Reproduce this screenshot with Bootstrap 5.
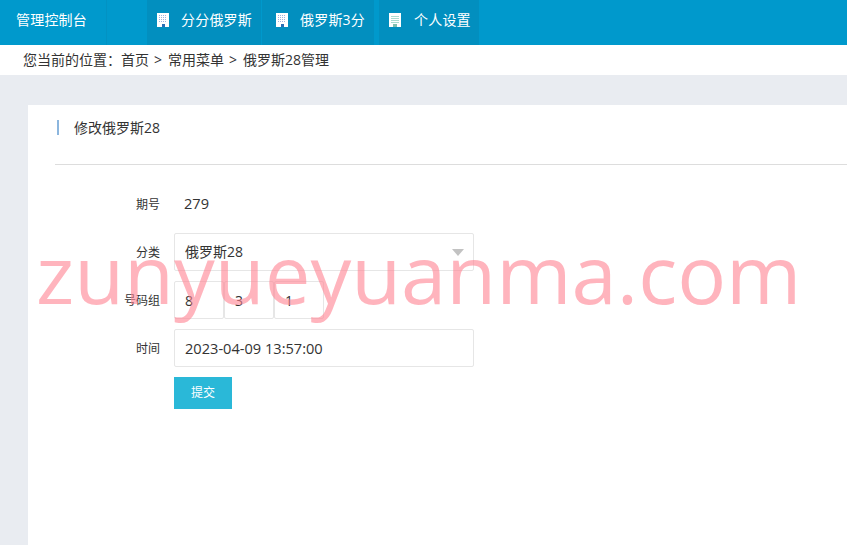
<!DOCTYPE html>
<html lang="zh">
<head>
<meta charset="utf-8">
<title>俄罗斯28管理</title>
<link rel="stylesheet" href="https://cdn.jsdelivr.net/npm/bootstrap@5.3.0/dist/css/bootstrap.min.css">
<style>
html,body{height:100%;overflow:hidden}
body{background:#e9ecf1;color:#333;font-family:"Open Sans","Noto Sans CJK SC",sans-serif;font-size:14px;position:relative}
.topbar{height:45px;background:#0099cc;color:#fff;font-size:14px;letter-spacing:.2px}
.brandbox{width:107px;padding-left:16px;line-height:39px;height:45px;border-right:1px solid #0292c3;margin-right:40px}
.menuitem{height:45px;background:#028fbf;color:#fff;text-decoration:none}
.menuone{width:114px;padding-left:10px;gap:12px;margin-right:1px}
.menutwo{width:112px;padding-left:14px;gap:12px;margin-right:5px}
.menuthree{width:100px;padding-left:10px;gap:13px}
.menuitem svg{flex:none;margin-top:13px}
.menuitem span{line-height:39px}
.crumbbar{height:30px;background:#fff;padding-left:23px;line-height:29px;color:#333}
.crumbsep{padding:0 6px 0 5px}
.panelwrap{padding:30px 0 0 28px;height:470px}
.panelbox{background:#fff;height:100%;padding-left:27px}
.headline{height:60px;border-bottom:1px solid #ddd;padding-top:15px;padding-left:2px}
.headline div{border-left:2px solid #8cb6de;height:15px;line-height:15px;padding-left:15px}
.formarea{padding-top:20px}
.fieldrow{display:flex;margin-bottom:10px}
.fieldlabel{width:105px;text-align:right;margin-right:14px;font-size:12px;line-height:39px;height:38px;flex:none}
.fieldbox{width:300px;height:38px;border:1px solid #e6e6e6;border-radius:2px;padding:0 10px;line-height:36px;position:relative;background:#fff}
.fieldwide{font-size:14.6px}
.fieldplain{line-height:37px;font-size:14.6px;padding-left:10px;height:38px}
.caretmark{position:absolute;right:9px;top:15px;width:0;height:0;border-left:6px solid transparent;border-right:6px solid transparent;border-top:7px solid #c2c2c2}
.digitbox{width:50px;height:38px;border:1px solid #e6e6e6;border-radius:2px;padding-left:10px;line-height:37px}
.submitbtn{background:#2ab8d8;color:#fff;border:0;border-radius:0;width:58px;height:32px;font-size:12px;padding:0}
.watermark{position:absolute;left:36px;top:230px;font-family:"Open Sans",sans-serif;font-size:81.4px;line-height:86px;color:rgba(255,130,145,.6);white-space:nowrap;pointer-events:none}
</style>
</head>
<body>
<div class="topbar d-flex">
  <div class="brandbox">管理控制台</div>
  <a class="menuitem menuone d-flex" href="#"><svg width="12" height="14" viewBox="0 0 12 14"><path fill="#fff" d="M0 0h12v14H0z"/><path fill="#9db3e0" d="M2 2h1v1H2zm2 0h1v1H4zm2 0h1v1H6zm2 0h1v1H8zM2 4h1v1H2zm2 0h1v1H4zm2 0h1v1H6zm2 0h1v1H8zM2 6h1v1H2zm2 0h1v1H4zm2 0h1v1H6zm2 0h1v1H8zM2 8h1v1H2zm2 0h1v1H4zm2 0h1v1H6zm2 0h1v1H8z"/><path fill="#2a6fb5" d="M5 11h3v3H5z"/></svg><span>分分俄罗斯</span></a>
  <a class="menuitem menutwo d-flex" href="#"><svg width="12" height="14" viewBox="0 0 12 14"><path fill="#fff" d="M0 0h12v14H0z"/><path fill="#9db3e0" d="M2 2h1v1H2zm2 0h1v1H4zm2 0h1v1H6zm2 0h1v1H8zM2 4h1v1H2zm2 0h1v1H4zm2 0h1v1H6zm2 0h1v1H8zM2 6h1v1H2zm2 0h1v1H4zm2 0h1v1H6zm2 0h1v1H8zM2 8h1v1H2zm2 0h1v1H4zm2 0h1v1H6zm2 0h1v1H8z"/><path fill="#2a6fb5" d="M5 11h3v3H5z"/></svg><span>俄罗斯3分</span></a>
  <a class="menuitem menuthree d-flex" href="#"><svg width="12" height="14" viewBox="0 0 12 14"><path fill="#fff" d="M0 0h12v14H0z"/><path fill="#a8dccf" d="M2 3h8v1H2zm0 2h8v1H2zm0 2h8v1H2zm0 2h8v1H2z"/><path fill="#7fbfb0" d="M4 11h4v3H4z"/></svg><span>个人设置</span></a>
</div>
<div class="crumbbar">您当前的位置：首页<span class="crumbsep">&gt;</span>常用菜单<span class="crumbsep">&gt;</span>俄罗斯28管理</div>
<div class="panelwrap">
  <div class="panelbox">
    <div class="headline"><div>修改俄罗斯28</div></div>
    <div class="formarea">
      <div class="fieldrow"><div class="fieldlabel">期号</div><div class="fieldplain">279</div></div>
      <div class="fieldrow"><div class="fieldlabel">分类</div><div class="fieldbox">俄罗斯28<i class="caretmark"></i></div></div>
      <div class="fieldrow"><div class="fieldlabel">号码组</div><div class="digitbox">8</div><div class="digitbox">3</div><div class="digitbox">1</div></div>
      <div class="fieldrow"><div class="fieldlabel">时间</div><div class="fieldbox fieldwide">2023-04-09 13:57:00</div></div>
      <div class="fieldrow"><div class="fieldlabel"></div><button class="btn submitbtn" type="button">提交</button></div>
    </div>
  </div>
</div>
<div class="watermark">zunyueyuanma.com</div>
<script src="https://cdn.jsdelivr.net/npm/bootstrap@5.3.0/dist/js/bootstrap.bundle.min.js"></script>
</body>
</html>
